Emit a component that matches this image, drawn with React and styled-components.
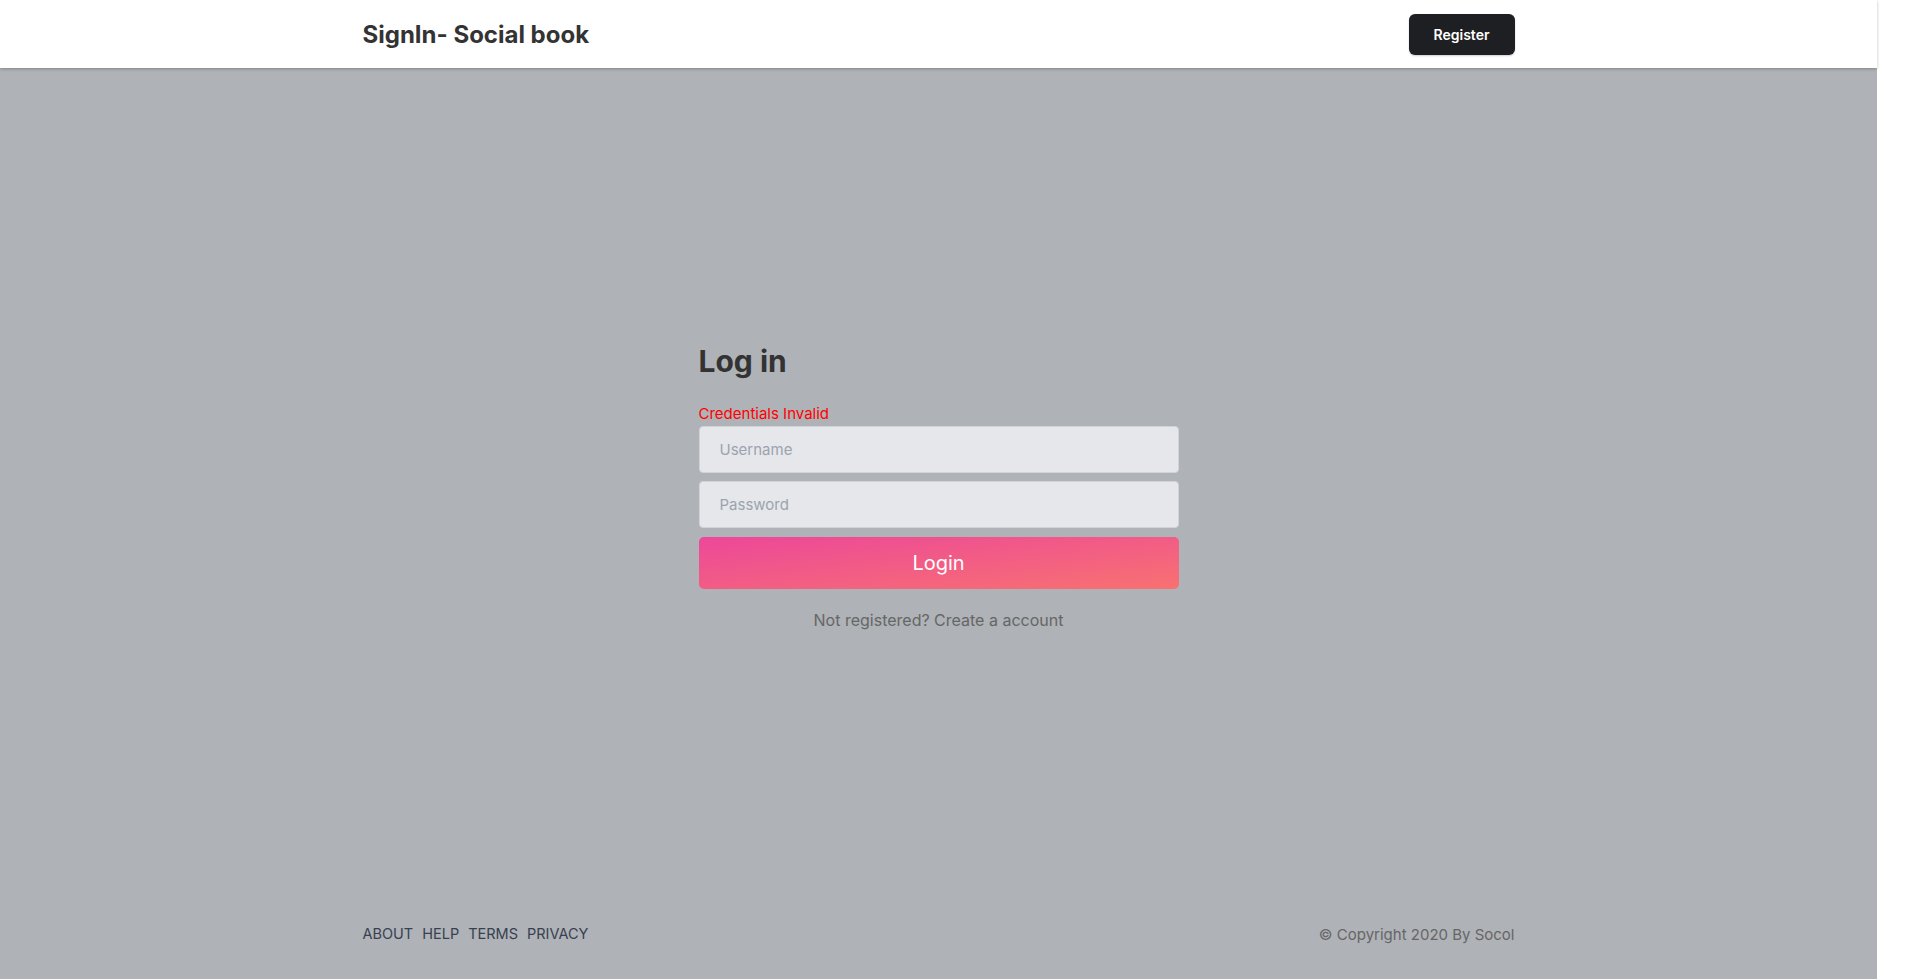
import styled, { createGlobalStyle } from 'styled-components'

const GlobalStyle = createGlobalStyle`
    body {
        margin: 0;
        background: #ffffff;
        font-family: Inter, 'Noto Sans', sans-serif;
    }
    * {
        box-sizing: border-box;
    }
`

const Page = styled.div`
    width: 1877px;
    min-height: 979px;
    display: flex;
    flex-direction: column;
    background: #afb2b6;
`

const Header = styled.header`
    height: 68px;
    background: #ffffff;
    box-shadow: 0 1px 3px rgba(0, 0, 0, 0.25);
    position: relative;
    z-index: 1;
`

const Inner = styled.div`
    max-width: 1152px;
    height: 100%;
    margin: 0 auto;
    display: flex;
    align-items: center;
    justify-content: space-between;
`

const Brand = styled.h1`
    margin: 0;
    font-size: 24px;
    font-weight: 700;
    color: #333333;
`

const RegisterButton = styled.button`
    width: 106px;
    height: 41px;
    border: none;
    border-radius: 6px;
    background: #1e1f22;
    color: #ffffff;
    font-family: Inter, sans-serif;
    font-size: 14px;
    font-weight: 600;
    cursor: pointer;
    box-shadow: 0 1px 2px rgba(0, 0, 0, 0.2);
`

const Main = styled.main`
    flex: 1;
    display: flex;
    justify-content: center;
    padding-top: 275px;
`

const Form = styled.form`
    width: 480px;
    display: flex;
    flex-direction: column;
`

const Heading = styled.h2`
    margin: 0 0 23px;
    font-size: 30px;
    line-height: 36px;
    font-weight: 700;
    color: #333333;
`

const ErrorText = styled.p`
    margin: 0;
    font-size: 15px;
    line-height: 24px;
    color: #ff0000;
`

const Input = styled.input`
    height: 47px;
    margin-bottom: 8px;
    padding: 0 20px;
    background: #e5e7eb;
    border: 1px solid #d1d3d8;
    border-radius: 4px;
    font-family: Inter, sans-serif;
    font-size: 15px;
    color: #333333;
    outline: none;
    &::placeholder {
        color: #9ca3af;
    }
`

const LoginButton = styled.button`
    height: 52px;
    margin-top: 1px;
    border: none;
    border-radius: 5px;
    background: linear-gradient(to bottom right, #ec4899, #f87171);
    color: #ffffff;
    font-family: Inter, sans-serif;
    font-size: 20px;
    cursor: pointer;
`

const Note = styled.p`
    margin: 19px 0 0;
    text-align: center;
    font-size: 16px;
    line-height: 24px;
    color: #666666;
`

const Footer = styled.footer`
    height: 92px;
`

const Links = styled.nav`
    display: flex;
    gap: 9px;
`

const FootLink = styled.a`
    font-size: 14.5px;
    color: #374151;
    text-decoration: none;
`

const Copyright = styled.span`
    font-size: 15px;
    color: #666666;
    margin-top: 2px;
`

const App = () => {
    return (
        <>
            <GlobalStyle />
            <Page>
                <Header>
                    <Inner>
                        <Brand>SignIn- Social book</Brand>
                        <RegisterButton>Register</RegisterButton>
                    </Inner>
                </Header>
                <Main>
                    <Form onSubmit={(e) => e.preventDefault()}>
                        <Heading>Log in</Heading>
                        <ErrorText>Credentials Invalid</ErrorText>
                        <Input placeholder="Username" />
                        <Input type="password" placeholder="Password" />
                        <LoginButton>Login</LoginButton>
                        <Note>Not registered? Create a account</Note>
                    </Form>
                </Main>
                <Footer>
                    <Inner>
                        <Links>
                            <FootLink href="#">ABOUT</FootLink>
                            <FootLink href="#">HELP</FootLink>
                            <FootLink href="#">TERMS</FootLink>
                            <FootLink href="#">PRIVACY</FootLink>
                        </Links>
                        <Copyright>© Copyright 2020 By Socol</Copyright>
                    </Inner>
                </Footer>
            </Page>
        </>
    )
}

export default App
